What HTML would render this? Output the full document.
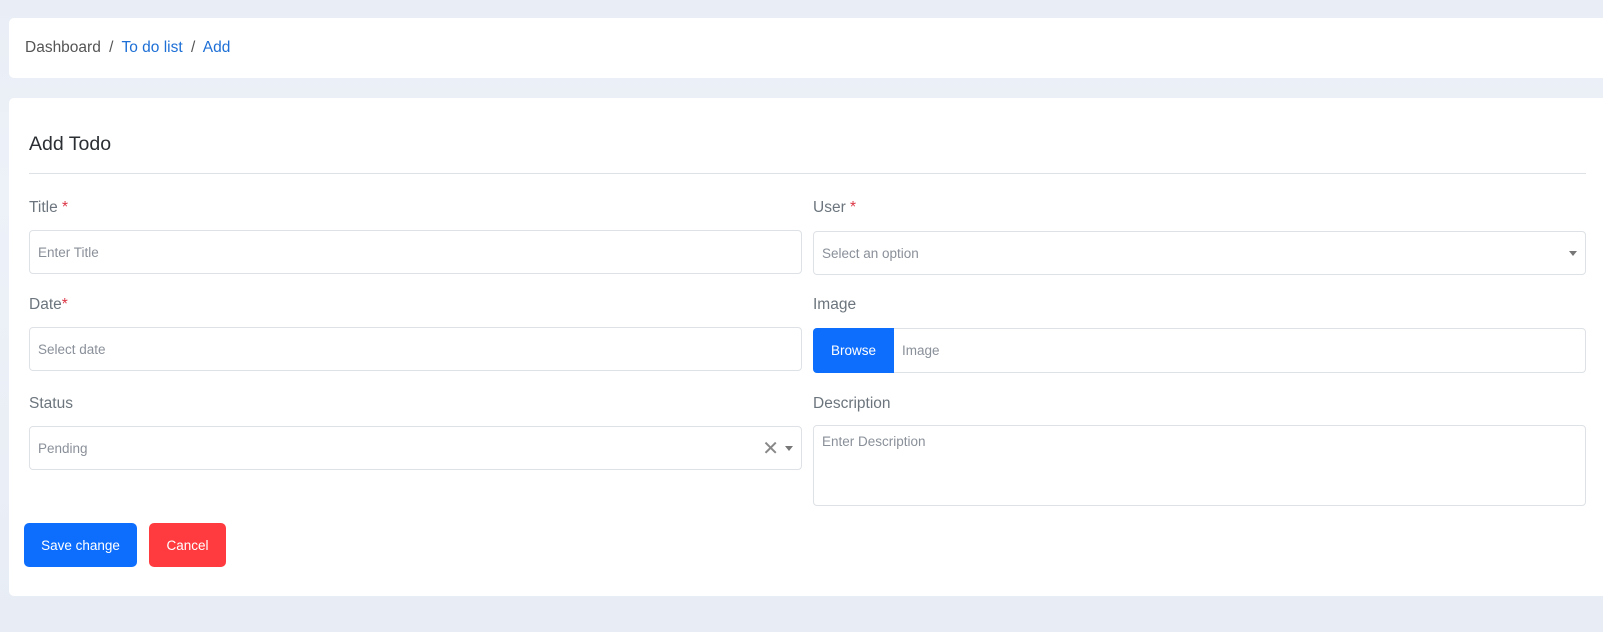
<!DOCTYPE html>
<html><head><meta charset="utf-8"><style>
*{box-sizing:border-box;margin:0;padding:0}
body{width:1603px;height:632px;overflow:hidden;background:linear-gradient(#e9eef6,#edf1f8 30%,#e8edf5);font-family:"Liberation Sans",sans-serif;position:relative}
.abs{position:absolute}
.card{background:#fff;border-radius:5px}
.lbl{position:absolute;font-size:15.5px;color:#6c757d}
.req{color:#dc3545}
.inp{position:absolute;border:1px solid #dee2e6;border-radius:4px;background:#fff;font-size:13.5px;color:#8a9099;padding-left:8px;display:flex;align-items:center}
.btn{position:absolute;border-radius:5px;color:#fff;font-size:13.5px;display:flex;align-items:center;justify-content:center}
</style></head><body>
<div class="abs card" style="left:9px;top:18px;width:1620px;height:60px"></div>
<div class="abs" style="left:25px;top:39px;font-size:15.5px;color:#555">Dashboard <span style="margin:0 4px">/</span> <span style="color:#1d6fd6">To do list</span> <span style="margin:0 4px">/</span> <span style="color:#1d6fd6">Add</span></div>
<div class="abs card" style="left:9px;top:98px;width:1620px;height:498px"></div>
<div class="abs" style="left:29px;top:133px;font-size:19.5px;color:#2b2f33">Add Todo</div>
<div class="abs" style="left:29px;top:173px;width:1557px;height:1px;background:#dee2e6"></div>

<div class="lbl" style="left:29px;top:199px">Title <span class="req">*</span></div>
<div class="inp" style="left:29px;top:230px;width:773px;height:44px">Enter Title</div>
<div class="lbl" style="left:813px;top:199px">User <span class="req">*</span></div>
<div class="inp" style="left:813px;top:231px;width:773px;height:44px">Select an option<span style="position:absolute;right:8px;top:19px;border:4px solid transparent;border-top:5px solid #777"></span></div>

<div class="lbl" style="left:29px;top:296px">Date<span class="req">*</span></div>
<div class="inp" style="left:29px;top:327px;width:773px;height:44px">Select date</div>
<div class="lbl" style="left:813px;top:296px">Image</div>
<div class="inp" style="left:813px;top:328px;width:773px;height:45px;padding-left:0">
<div style="width:81px;background:#0d6efd;color:#fff;display:flex;align-items:center;justify-content:center;border-radius:4px 0 0 4px;margin:-1px 0 -1px -1px;height:45px">Browse</div><span style="margin-left:8px">Image</span></div>

<div class="lbl" style="left:29px;top:395px">Status</div>
<div class="inp" style="left:29px;top:426px;width:773px;height:44px">Pending
<span style="position:absolute;right:22px;top:9px;font-size:20px;color:#888">✕</span>
<span style="position:absolute;right:8px;top:19px;border:4px solid transparent;border-top:5px solid #777"></span></div>
<div class="lbl" style="left:813px;top:395px">Description</div>
<div class="inp" style="left:813px;top:425px;width:773px;height:81px;align-items:flex-start;padding-top:8px">Enter Description</div>

<div class="btn" style="left:24px;top:523px;width:113px;height:44px;background:#0d6efd">Save change</div>
<div class="btn" style="left:149px;top:523px;width:77px;height:44px;background:#ff3b3f">Cancel</div>
</body></html>
